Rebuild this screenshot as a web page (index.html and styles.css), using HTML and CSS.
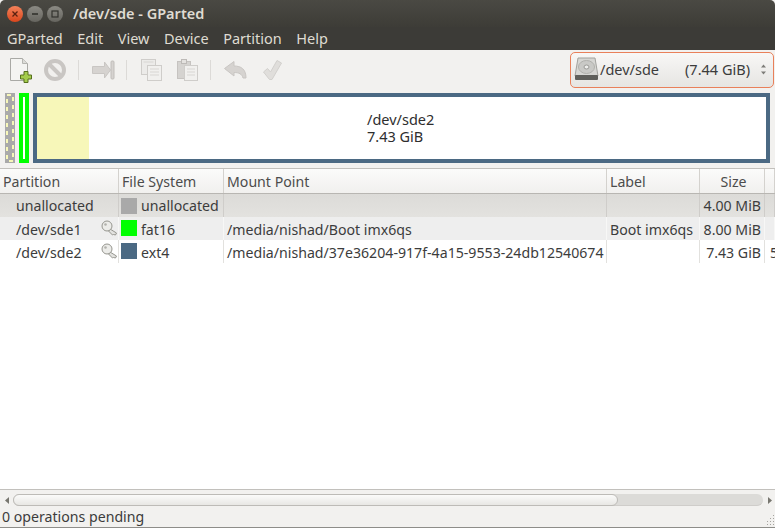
FILE: index.html
```html
<!DOCTYPE html>
<html lang="en">
<head>
  <meta charset="UTF-8" />
  <title>/dev/sde - GParted</title>
  <link rel="stylesheet" href="styles.css">
</head>
<body>
  <div class="window">

    <!-- Title bar -->
    <div class="titlebar">
      <div class="winbtns">
        <span class="winbtn close">
          <svg width="8" height="8" viewBox="0 0 8 8"><path d="M1.500 1.500l5 5M6.500 1.500l-5 5" stroke="#5a2110" stroke-width="1.300"/></svg>
        </span>
        <span class="winbtn">
          <svg width="8" height="8" viewBox="0 0 8 8"><path d="M1 4h6" stroke="#33322e" stroke-width="1.600"/></svg>
        </span>
        <span class="winbtn">
          <svg width="8" height="8" viewBox="0 0 8 8"><rect x="1" y="1" width="6" height="6" fill="none" stroke="#33322e" stroke-width="1.200"/></svg>
        </span>
      </div>
      <span class="wintitle">/dev/sde - GParted</span>
    </div>

    <!-- Menu -->
    <div class="menubar">
      <span>GParted</span>
      <span>Edit</span>
      <span>View</span>
      <span>Device</span>
      <span>Partition</span>
      <span>Help</span>
    </div>

    <!-- Toolbar -->
    <div class="toolbar">
      <svg class="tool tool-new" width="24" height="26" viewBox="0 0 24 26">
        <path d="M1.500 1.500h12l5 5v17h-17z" fill="#f4f4f2" stroke="#a9a9a5"/>
        <path d="M13.500 1.500v5h5" fill="#dcdcd8" stroke="#b5b5b1"/>
        <path d="M15 14.500h4v3.500h3.500v4H19v3.500h-4V22h-3.500v-4H15z" fill="#a4cc4c" stroke="#566f1c"/>
      </svg>
      <svg class="tool tool-del" width="24" height="24" viewBox="0 0 24 24">
        <circle cx="12" cy="12" r="9" fill="#f1f0ee" stroke="#c9c6c3" stroke-width="4"/>
        <path d="M6 6l12 12" stroke="#c9c6c3" stroke-width="4"/>
      </svg>
      <span class="tool-sep sep-a"></span>
      <svg class="tool tool-resize" width="24" height="22" viewBox="0 0 24 22">
        <path d="M1.500 7.500h12V3l6 8-6 8v-4.500h-12z" fill="#d6d3d0" stroke="#c9c6c3" stroke-linejoin="round"/>
        <rect x="20" y="2" width="3" height="18" rx="1" fill="#d6d3d0" stroke="#c0bdba"/>
      </svg>
      <span class="tool-sep sep-b"></span>
      <svg class="tool tool-copy" width="24" height="24" viewBox="0 0 24 24">
        <rect x="1.500" y="1.500" width="14" height="15" fill="#ecebe9" stroke="#cfcdca"/>
        <rect x="7.500" y="7.500" width="14" height="15" fill="#f1f0ee" stroke="#cfcdca"/>
        <path d="M10 11h9M10 14h9M10 17h9M3.500 4h10" stroke="#d8d6d3"/>
      </svg>
      <svg class="tool tool-paste" width="24" height="24" viewBox="0 0 24 24">
        <rect x="1.500" y="3.500" width="13" height="17" fill="#d5d3d0" stroke="#c6c3c0"/>
        <rect x="5.500" y="1.500" width="5" height="4" fill="#e4e2df" stroke="#bdbab7"/>
        <rect x="8.500" y="7.500" width="13" height="15" fill="#f1f0ee" stroke="#cfcdca"/>
        <path d="M11 11h8M11 14h8M11 17h8" stroke="#d8d6d3"/>
      </svg>
      <span class="tool-sep sep-c"></span>
      <svg class="tool tool-undo" width="24" height="22" viewBox="0 0 24 22">
        <path d="M1.500 9.500L11 2.500v4.500c7 0 12 3 12 12h-3c-1-4-4-5.500-9-5.500v3.500z" fill="#d6d3d0" stroke="#c9c6c3" stroke-linejoin="round"/>
      </svg>
      <svg class="tool tool-apply" width="22" height="22" viewBox="0 0 22 22">
        <path d="M2.500 13l4-3.500 3 3.500L16 1.500l4.500 2.500L11 20.500H8.500z" fill="#e0dedb" stroke="#d2d0cd" stroke-linejoin="round"/>
      </svg>

      <div class="devicepick">
        <svg width="25" height="24" viewBox="0 0 25 24">
          <path d="M4 1h17l3 18H1z" fill="#d6d6d3" stroke="#a2a29e"/>
          <ellipse cx="12.500" cy="10" rx="8" ry="6.500" fill="#c9c9c6" stroke="#b0b0ac"/>
          <ellipse cx="12.500" cy="10" rx="2.500" ry="2" fill="#eeeeec" stroke="#9a9a96"/>
          <rect x="1" y="18" width="23" height="5" rx="1" fill="#5f5f5b"/>
        </svg>
        <span class="devname">/dev/sde</span>
        <span class="devsize">(7.44 GiB)</span>
        <svg class="updown" width="7" height="13" viewBox="0 0 7 13">
          <path d="M3.500 1.500L6 4.500H1zM3.500 11.500L1 8.500h5z" fill="#7d7c78"/>
        </svg>
      </div>
    </div>

    <!-- Disk graphic -->
    <div class="diskmap">
      <div class="part part-unalloc">
        <svg width="10" height="70" viewBox="0 0 10 70">
          <rect x="2" y="2" width="6" height="66" fill="none" stroke="#f7f7b9" stroke-width="2" stroke-dasharray="4 4"/>
        </svg>
      </div>
      <div class="part part-fat"><div class="part-fill"></div></div>
      <div class="part part-ext">
        <div class="part-used"></div>
        <div class="part-text">
          <div>/dev/sde2</div>
          <div>7.43 GiB</div>
        </div>
      </div>
    </div>

    <!-- Partition table -->
    <div class="table">
      <div class="row head">
        <div class="cell">Partition</div>
        <div class="cell">File System</div>
        <div class="cell">Mount Point</div>
        <div class="cell">Label</div>
        <div class="cell center">Size</div>
        <div class="cell"></div>
      </div>
      <div class="row selected">
        <div class="cell indent">unallocated</div>
        <div class="cell"><span class="swatch grey"></span>unallocated</div>
        <div class="cell"></div>
        <div class="cell"></div>
        <div class="cell right">4.00 MiB</div>
        <div class="cell"></div>
      </div>
      <div class="row alt low">
        <div class="cell indent keyed">/dev/sde1
          <svg class="key" width="17" height="16" viewBox="0 0 17 16">
            <path d="M9 9l6.500 4-1 2-2-.5-1 .5L7.500 11z" fill="#e2e2df" stroke="#96968f"/>
            <circle cx="6" cy="6" r="5" fill="#ecece9" stroke="#96968f"/>
            <circle cx="4.500" cy="4.500" r="1.300" fill="#b1b1ac"/>
          </svg>
        </div>
        <div class="cell"><span class="swatch green"></span>fat16</div>
        <div class="cell">/media/nishad/Boot imx6qs</div>
        <div class="cell">Boot imx6qs</div>
        <div class="cell right">8.00 MiB</div>
        <div class="cell"></div>
      </div>
      <div class="row low">
        <div class="cell indent keyed">/dev/sde2
          <svg class="key" width="17" height="16" viewBox="0 0 17 16">
            <path d="M9 9l6.500 4-1 2-2-.5-1 .5L7.500 11z" fill="#e2e2df" stroke="#96968f"/>
            <circle cx="6" cy="6" r="5" fill="#ecece9" stroke="#96968f"/>
            <circle cx="4.500" cy="4.500" r="1.300" fill="#b1b1ac"/>
          </svg>
        </div>
        <div class="cell"><span class="swatch blue"></span>ext4</div>
        <div class="cell">/media/nishad/37e36204-917f-4a15-9553-24db12540674</div>
        <div class="cell"></div>
        <div class="cell right">7.43 GiB</div>
        <div class="cell overflow">5</div>
      </div>
      <div class="table-rest"></div>
    </div>

    <div class="hscroll">
      <span class="arrow"><svg width="5" height="7" viewBox="0 0 5 7"><path d="M4 0v7L0 3.500z" fill="#77766f"/></svg></span>
      <div class="trough"><div class="thumb"></div></div>
      <span class="arrow"><svg width="5" height="7" viewBox="0 0 5 7"><path d="M1 0v7l4-3.500z" fill="#77766f"/></svg></span>
    </div>

    <!-- Status -->
    <div class="statusbar">
      <span>0 operations pending</span>
      <svg class="grip" width="10" height="10" viewBox="0 0 10 10">
        <path d="M8 0h1v1H8zM8 3h1v1H8zM5 3h1v1H5zM8 6h1v1H8zM5 6h1v1H5zM2 6h1v1H2zM8 9h1v1H8zM5 9h1v1H5zM2 9h1v1H2z" fill="#a5a39f"/>
      </svg>
    </div>
  </div>
</body>
</html>
```

FILE: styles.css
```css
html, body {
  margin: 0;
  padding: 0;
}
body {
  font-family: "Noto Sans", "Open Sans", sans-serif;
  font-size: 14.15px;
  color: #3c3c3c;
  background: #f2f1ef;
}
.window {
  width: 775px;
  height: 528px;
  display: flex;
  flex-direction: column;
  overflow: hidden;
}
.titlebar {
  height: 27px;
  padding: 0 0 0 7px;
  display: flex;
  align-items: center;
  background: linear-gradient(#4a4943, #3d3c37);
  border-radius: 5px 5px 0 0;
  flex: none;
}
.winbtns {
  display: flex;
  gap: 4px;
}
.winbtn {
  width: 16px;
  height: 16px;
  border-radius: 50%;
  background: linear-gradient(#8b8a84, #66655f);
  display: flex;
  align-items: center;
  justify-content: center;
}
.winbtn.close {
  background: linear-gradient(#f4825a, #d9461c);
}
.wintitle {
  margin-left: 10px;
  padding-bottom: 2px;
  color: #dfdbd2;
  font-size: 14.5px;
  font-weight: 600;
}
.menubar {
  height: 23px;
  flex: none;
  box-sizing: border-box;
  display: flex;
  align-items: center;
  gap: 14.5px;
  padding: 0 0 2px 7px;
  background: #3c3b37;
  color: #dfdbd2;
  font-size: 14.5px;
}
.toolbar {
  height: 39px;
  flex: none;
  display: flex;
  align-items: center;
  padding-left: 9px;
}
.tool {
  flex: none;
}
.tool-del { margin-left: 10px; }
.tool-resize { margin-left: 12px; }
.tool-copy { margin-left: 13px; }
.tool-paste { margin-left: 12px; }
.tool-undo { margin-left: 12px; }
.tool-apply { margin-left: 14px; }
.tool-sep {
  width: 1px;
  height: 20px;
  background: #dcdad7;
  flex: none;
}
.sep-a { margin-left: 11px; }
.sep-b { margin-left: 11px; }
.sep-c { margin-left: 10px; }
.devicepick {
  margin-left: auto;
  margin-right: 1px;
  width: 204px;
  height: 36px;
  box-sizing: border-box;
  border: 1px solid #e9805a;
  border-radius: 5px;
  background: linear-gradient(#f8f7f6, #e6e5e2);
  display: flex;
  align-items: center;
  padding: 0 0 1px 3px;
  font-size: 14.5px;
}
.devname { margin-left: 1px; }
.devsize { margin-left: 26px; }
.updown { margin-left: 10px; }
.diskmap {
  height: 78px;
  flex: none;
  display: flex;
  padding: 4px 5px;
  box-sizing: border-box;
  gap: 4px;
}
.part {
  box-sizing: border-box;
}
.part-unalloc {
  width: 10px;
  background: #a9a9a9;
}
.part-unalloc svg {
  display: block;
}
.part-fat {
  width: 10px;
  background: #00ff00;
  padding: 4px;
}
.part-fill {
  height: 100%;
  background: #fff;
  width: 2px;
}
.part-ext {
  flex: 1;
  border: 4px solid #4b6983;
  background: #fff;
  display: flex;
}
.part-used {
  width: 52px;
  background: #f7f7b9;
}
.part-text {
  margin-left: 278px;
  align-self: center;
  line-height: 17px;
  font-size: 14.5px;
  color: #2e2e2e;
}
.table {
  flex: 1;
  display: flex;
  flex-direction: column;
  margin-top: 1px;
  border-top: 1px solid #c2c0bc;
  background: #fff;
  min-height: 0;
}
.row {
  display: grid;
  grid-template-columns: 119px 105px 383px 93px 65px 10px;
  height: 23px;
  flex: none;
  align-items: center;
}
.cell {
  padding-left: 3px;
  white-space: nowrap;
  overflow: hidden;
  box-sizing: border-box;
  height: 100%;
  display: flex;
  align-items: center;
  border-right: 1px solid #e2e1de;
}
.cell.overflow {
  padding-left: 5px;
  border-right: 0;
}
.cell.indent { padding-left: 16px; }
.cell.keyed {
  justify-content: space-between;
}
.cell.center { justify-content: center; }
.cell.right {
  justify-content: flex-end;
  padding-right: 3px;
}
.low .cell { padding-top: 1px; }
.low .swatch,
.low .key { margin-top: -2px; }
.head {
  height: 25px;
  background: linear-gradient(#fbfbfa, #f1f0ee);
  border-bottom: 1px solid #b8b6b2;
  box-sizing: border-box;
  color: #4c4c4c;
}
.head .cell {
  border-right: 1px solid #d4d2ce;
}
.selected {
  background: linear-gradient(#dcdbd8, #e3e2df);
}
.selected .cell { border-right-color: #cfcdca; }
.alt {
  background: #eeeeee;
}
.alt .cell { border-right-color: #f7f7f6; }
.swatch {
  width: 16px;
  height: 16px;
  margin: 0 4px 0 -1px;
  flex: none;
}
.swatch.grey { background: #a9a9a9; }
.swatch.green { background: #00ff00; }
.swatch.blue { background: #4b6983; }
.table-rest {
  flex: 1;
  border-bottom: 1px solid #c2c0bc;
}
.hscroll {
  height: 12px;
  flex: none;
  display: flex;
  align-items: center;
  margin-top: 4px;
  padding-left: 1px;
}
.arrow {
  width: 12px;
  height: 12px;
  flex: none;
  display: flex;
  align-items: center;
  justify-content: center;
}
.trough {
  flex: 1;
  height: 12px;
  background: #dcdbd8;
  border-bottom: 1px solid #cfcdca;
  box-sizing: border-box;
  border-radius: 6px;
}
.thumb {
  width: 605px;
  height: 12px;
  box-sizing: border-box;
  background: linear-gradient(#fbfbfa, #e8e7e4);
  border: 1px solid #bdbbb7;
  border-radius: 6px;
}
.statusbar {
  height: 22px;
  flex: none;
  box-sizing: border-box;
  display: flex;
  align-items: center;
  justify-content: space-between;
  padding: 0 0 1px 2px;
  border-bottom: 1px solid #8e8d89;
}
.grip {
  align-self: flex-end;
  margin: 0 0 1px 0;
}
```
